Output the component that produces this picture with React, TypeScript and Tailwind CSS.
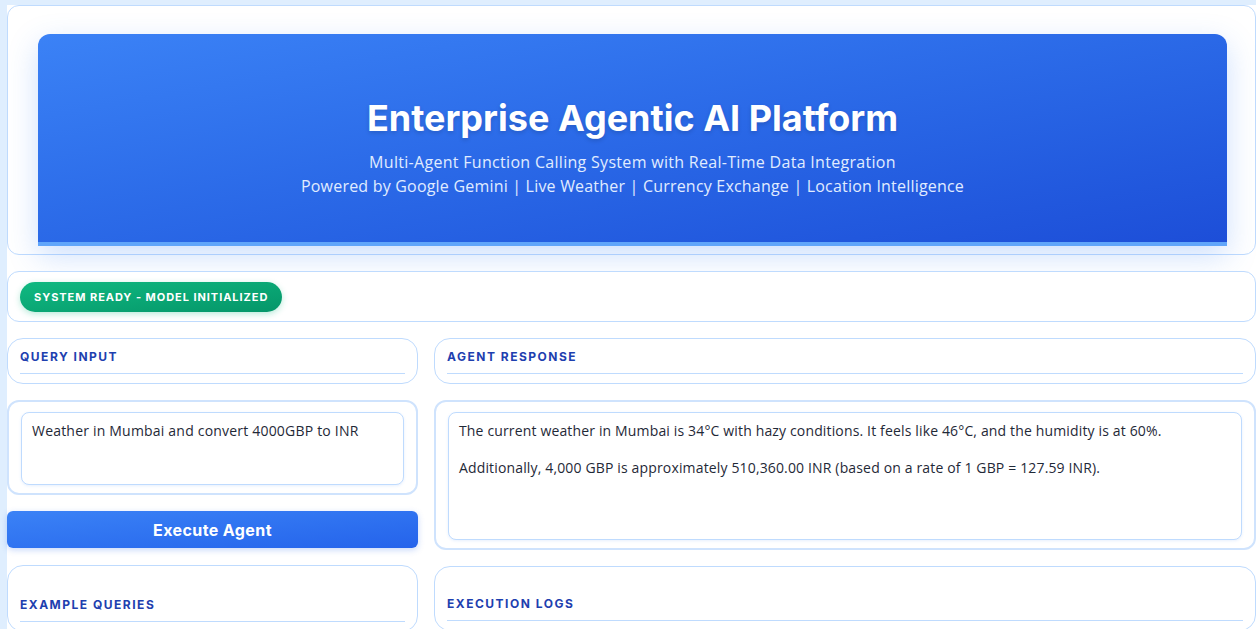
import React from "react";

const HEAD = "font-['Inter','Liberation_Sans',sans-serif]";
const BODY = "font-['Open_Sans','Lato',sans-serif]";

function SectionHeader({ title, pt }: { title: string; pt: string }) {
  return (
    <div className={`rounded-2xl border border-[#bfdbfe] bg-white px-3 ${pt} pb-[9px]`}>
      <div
        className={`${HEAD} border-b border-[#bfdbfe] pb-[8px] text-[12px] font-bold uppercase leading-[16px] tracking-[1.5px] text-[#1e40af]`}
      >
        {title}
      </div>
    </div>
  );
}

export default function App() {
  return (
    <div className="min-h-[629px] w-[1256px] overflow-hidden bg-[#dfeefe] pl-[7px] pt-[5px]">
      <div className="flex w-[1249px] flex-col bg-white">
        {/* Header */}
        <div className="rounded-xl border border-[#bfdbfe] bg-white pb-[8px] pl-[30px] pr-[28px] pt-[28px]">
          <div className="rounded-t-xl border-b-4 border-[#60a5fa] bg-gradient-to-br from-[#3b82f6] to-[#1d4ed8] pb-[44px] pt-[62px] text-center shadow-[0_10px_30px_rgba(59,130,246,0.25)]">
            <h1
              className={`${HEAD} text-[36px] font-bold leading-[44px] text-white [text-shadow:0_2px_4px_rgba(0,0,0,0.15)]`}
            >
              Enterprise Agentic AI Platform
            </h1>
            <p className={`${BODY} mt-[10px] text-[16px] leading-[24px] tracking-[0.3px] text-[#e0ecff]`}>
              Multi-Agent Function Calling System with Real-Time Data Integration
            </p>
            <p className={`${BODY} text-[16px] leading-[24px] tracking-[0.2px] text-[#e0ecff]`}>
              Powered by Google Gemini | Live Weather | Currency Exchange | Location Intelligence
            </p>
          </div>
        </div>

        {/* Status */}
        <div className="mt-4 rounded-xl border border-[#bfdbfe] bg-white pb-[9px] pl-3 pt-[10px]">
          <span
            className={`${HEAD} inline-flex h-[30px] items-center rounded-full bg-gradient-to-br from-[#10b981] to-[#059669] px-[14px] text-[11px] font-bold uppercase tracking-[0.95px] text-white shadow-[0_2px_6px_rgba(16,185,129,0.3)]`}
          >
            System Ready - Model Initialized
          </span>
        </div>

        {/* Columns */}
        <div className="mt-4 grid grid-cols-[411px_822px] gap-4">
          {/* Left */}
          <div className="flex flex-col">
            <SectionHeader title="Query Input" pt="pt-[10px]" />
            <div className="mt-4 rounded-xl border-2 border-[#cfe3fd] bg-white px-3 pb-[8px] pt-[10px]">
              <div
                className={`${BODY} h-[73px] rounded-lg border border-[#bfdbfe] bg-white px-[10px] pt-[9px] text-[14px] leading-[18px] tracking-[0.2px] text-[#1f2937] shadow-[0_1px_3px_rgba(59,130,246,0.12)]`}
              >
                Weather in Mumbai and convert 4000GBP to INR
              </div>
            </div>
            <button
              className={`${HEAD} mt-[16px] h-[37px] w-full rounded-md bg-gradient-to-br from-[#3b82f6] to-[#2563eb] text-[16px] font-bold tracking-[0.4px] text-white shadow-[0_2px_6px_rgba(37,99,235,0.25)]`}
            >
              Execute Agent
            </button>
            <div className="mt-[17px]">
              <SectionHeader title="Example Queries" pt="pt-[31px]" />
            </div>
          </div>

          {/* Right */}
          <div className="flex flex-col">
            <SectionHeader title="Agent Response" pt="pt-[10px]" />
            <div className="mt-4 rounded-xl border-2 border-[#cfe3fd] bg-white px-3 pb-[8px] pt-[10px]">
              <div
                className={`${BODY} h-[128px] rounded-lg border border-[#bfdbfe] bg-white px-[10px] pt-[9px] text-[14px] leading-[18px] tracking-[0.15px] text-[#1f2937] shadow-[0_1px_3px_rgba(59,130,246,0.12)]`}
              >
                <p>
                  The current weather in Mumbai is 34°C with hazy conditions. It feels like 46°C, and the humidity is at 60%.
                </p>
                <p className="mt-[19px]">
                  Additionally, 4,000 GBP is approximately 510,360.00 INR (based on a rate of 1 GBP = 127.59 INR).
                </p>
              </div>
            </div>
            <div className="mt-4">
              <SectionHeader title="Execution Logs" pt="pt-[29px]" />
            </div>
          </div>
        </div>
      </div>
    </div>
  );
}
